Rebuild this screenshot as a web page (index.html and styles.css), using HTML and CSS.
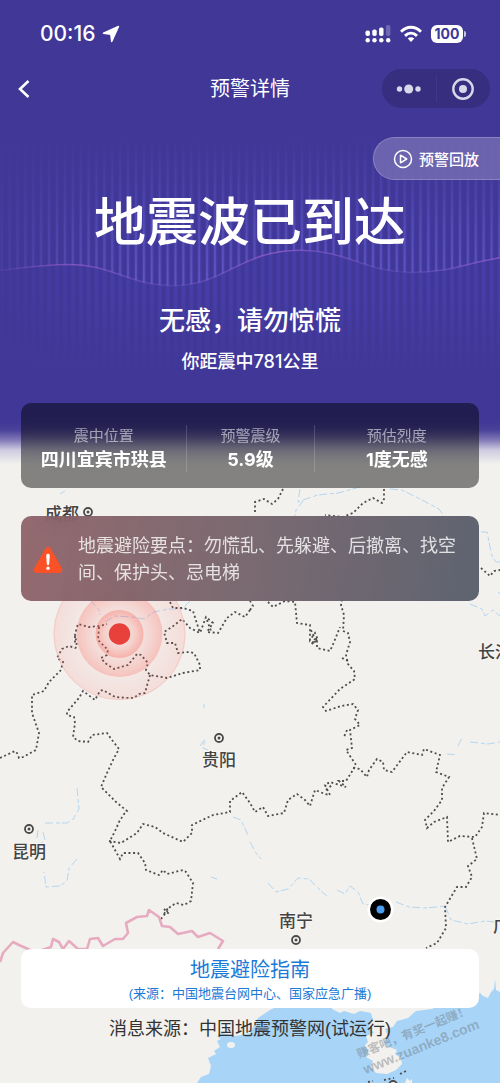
FILE: index.html
```html
<!DOCTYPE html>
<html lang="zh-CN">
<head>
<meta charset="utf-8">
<meta name="viewport" content="width=device-width, initial-scale=1">
<title>预警详情</title>
<link rel="stylesheet" href="styles.css">
</head>
<body>
<div class="screen">
  <svg class="map" viewBox="0 0 500 1083" preserveAspectRatio="xMidYMin slice" role="img" aria-label="震中地图">
    <defs>
      <radialGradient id="ring"><stop offset="0" stop-color="#ff5a50" stop-opacity=".04"/><stop offset=".6" stop-color="#ff5a50" stop-opacity=".12"/><stop offset="1" stop-color="#ff5a50" stop-opacity=".34"/></radialGradient>
      <g id="city"><circle r="4" fill="#f7f6f3" stroke="#4a4a4a" stroke-width="1.8"/><circle r="1.5" fill="#4a4a4a"/></g>
    </defs>
    <path class="sea" d="M197 1083L201 1077L209 1074L211 1066L208 1058L216 1054L214 1051L220 1047L217 1041L221 1039L217 1036L222 1033L236 1036L250 1033L258 1018L270 1010L290 1000L372 1000L370 1011L373 1019L369 1027L374 1033L366 1036L368 1042L364 1046L369 1050L366 1057L373 1061L371 1067L376 1073L387 1074L396 1070L402 1064L401 1058L395 1054L397 1050L387 1046L384 1042L388 1036L385 1029L393 1027L397 1021L408 1018L416 1011L432 1009L440 1005L463 1003L472 995L480 993L483 996L488 998L491 992L494 989L495 979L496 990L500 992V1083z"/>
    <g class="isle"><ellipse cx="231" cy="1045" rx="4" ry="3"/><path d="M332 1009l8 4 4-2 10 3 6-3 12 2v-7h-40zM405 1083l2-5 3 3 2-2v4z"/></g>
    <g class="river">
      <path d="M60 494l5-3M300 489l-2 13 5-1-7 9-1 6M303 500l15-5 20-2 22-6M390 489l12 1 18 9 19 10 5 7M481 532l6 0 2 10 3 14 4 6 4 0"/>
      <path d="M470 604l12 5 3 7 8-6 7 6M90 600l9 10 1 5M105 622l10-6 17 1 12 2 10-7 14-3 14 0 8-8M204 704l0 4M200 746l5-7-2 9 5 2"/>
      <path d="M447 754l10 1M458 746l4-8M470 742l18 2 12-2M77 788l2 21-5 8M38 830l-1 8M45 823l10 0 12 0 9-6M43 832l2 8-5 4M77 859l-8 9-2 13-7 5-14 1-2-15M233 817l8 3 7 15M250 842l6 11 5 6M268 883l8 9 12-3 10-11 11 1 12 12 6 5M337 890l8 4 5-8 8 6 5 12 8 1M396 902l13 5 17 1 19-2 6 14 17 4 17-3 10 1"/>
      <path d="M498 592l2 2M211 877l6 2"/>
    </g>
    <g class="border">
      <path d="M0 758l15-7 2 2 2 5 4-1 13-7 3-17-7-20 0-18 12-4 5-9 12-12 2-8-6-4 5-9 7-3 6 2 2-1-2-13 3-10 11 3 11-1 7-2"/>
      <path d="M99 627l-1 13 3 3 7 7-1 5-6 3 4 5 9 6 14-4 9-11 4 1 7 8-2 7 4 5 17 3 16-5 17-3 0-5-6-12-5-1-11 1-3-10-8 0-3-11 8-5 10-8 8 9 10 5 6-16 7 6-6 9 11 1 9-15 8-6 10 5 5-7"/>
      <path d="M170 602l3 6 10 0 10 3 7 22M250 610l3-4-3-5M150 675l-5 18-6 1-5 4-6 0-13-1-12-7-3 1-5 9-12-9-4 7-12 14 0 3 7 2 1 6-2 14 5 4 10 1 4-7 15-2 5 7 7 9-5 9-7 15-6 14 15 15 11 9-3 3-5 8-3 7-6 12 10 18 3-6 15 0 7 10 1 7 13 5 4-5 4 4 16-4 3 2 7 11-2 18-7 4-8-2-6 4-9 12M164 909l5 5M164 914l4-6"/>
      <path d="M109 841l12 2 16-10 6-9 12 3 8 6 20 9 9-9 0-8 21-10 17-3 0-11 12-9 8 11 5 9 8-5 5 9 16-3 4-13 9-6 8 6 5 6 5-16 10 4 5 1-5-10 5-3 16 5-7-6 7 0 10-16-10-15 6-2-2-18 10-5-5-6 3-9-5-6-12 2-15 5-3-4 17-18 15-10-1-8-6-7-2-9 4-13-2-9-5-2 1-16-3-10 3-15"/>
      <path d="M268 602l5 5 12-6 10 1 2 21 13 2 0 15 5-7 3 7-7 4 6-6 0 10 13 3 4-9 6-15M353 768l7 1 7 8 2-7 8-11 6 3 1 8 8 2 15-20 15 3 2-6 16 6-4 17 13 5-7 11 0 12-8 11-9 9 2 8 7-6 13-5 1 25 12-6 15 1 7-10 2-14 16 2"/>
      <path d="M472 838l5 21-9 7 4 11-6 10-9 0-12 20 1 21-9 15-11 5M283 489l-5 10-6 5-8-5-9 3 0 11M384 489l0 10-2 4-9-5-10 5-10 10-10 4-18-2M481 568l9 8 4-5 6-1"/>
      <path d="M368 1082l5-1M384 1080l10-2M400 1074l6-3M75 636l0 7M311 630l4 9-3 5 4-3M326 790l6-5M347 730l-3 7M342 658l6 3M207 620l4 11"/>
    </g>
    <path class="nation" d="M0 962l3-9 10-11 6 3 9 4 7 3 10-3 6-2 2-8 6 3 4 7 6-8 9 8 9 0 3-10 8-1 5 8 12-7 8 0 5-6-2-10 11-6 10-1 2-6 10 7 3 9 8 1 8 7 14-3 6 6 12-4 13 8-5 8"/>
    <g class="cities">
      <use href="#city" x="88" y="512"/><use href="#city" x="219" y="738"/><use href="#city" x="29" y="829"/><use href="#city" x="296" y="940"/><use href="#city" x="393" y="1085"/>
      <text x="45" y="520">成都</text><text x="202" y="766">贵阳</text><text x="12" y="858">昆明</text><text x="279" y="927">南宁</text><text x="478" y="658">长沙</text><text x="493" y="932">广州</text>
    </g>
    <g fill="url(#ring)"><circle cx="119.500" cy="634" r="66" opacity=".4"/><circle cx="119.500" cy="634" r="43" opacity=".8"/><circle cx="119.500" cy="634" r="24"/></g>
    <circle cx="119.500" cy="634" r="65.500" fill="none" stroke="#f8b5ae" stroke-opacity=".5"/>
    <circle cx="119.500" cy="634" r="10.700" fill="#e8413c"/>
    <circle cx="380.500" cy="909.500" r="13" fill="#fff"/><circle cx="380.500" cy="909.500" r="10.500"/><circle cx="380.500" cy="909.500" r="4" fill="#4a9df0"/>
  </svg>
  <svg class="wave" viewBox="0 0 500 460" preserveAspectRatio="xMidYMin slice" aria-hidden="true">
    <defs>
      <pattern id="bars" width="7.800" height="460" patternUnits="userSpaceOnUse"><rect x="4" width="1.600" height="460" fill="#928bec"/></pattern>
      <pattern id="bands" width="7.800" height="460" patternUnits="userSpaceOnUse"><rect x="3" width="4" height="460" fill="#5249c4"/></pattern>
      <linearGradient id="up" x1="0" y1="130" x2="0" y2="285" gradientUnits="userSpaceOnUse"><stop stop-color="#000"/><stop offset=".4" stop-color="#333"/><stop offset="1" stop-color="#aaa"/></linearGradient>
      <linearGradient id="down" x1="0" y1="130" x2="0" y2="375" gradientUnits="userSpaceOnUse"><stop stop-color="#000"/><stop offset=".4" stop-color="#999"/><stop offset=".65" stop-color="#999"/><stop offset="1" stop-color="#000"/></linearGradient>
      <linearGradient id="edge"><stop stop-color="#403797" stop-opacity=".75"/><stop offset=".18" stop-color="#403797" stop-opacity=".2"/><stop offset=".3" stop-color="#403797" stop-opacity="0"/></linearGradient>
      <linearGradient id="line"><stop stop-color="#a463d0" stop-opacity=".1"/><stop offset=".15" stop-color="#a463d0" stop-opacity=".6"/><stop offset=".35" stop-color="#8a66da" stop-opacity=".2"/><stop offset=".55" stop-color="#a463d0" stop-opacity=".7"/><stop offset=".8" stop-color="#7a62d8" stop-opacity=".25"/><stop offset="1" stop-color="#a463d0" stop-opacity=".7"/></linearGradient>
      <mask id="fadeUp" maskUnits="userSpaceOnUse" x="0" y="0" width="500" height="460"><rect width="500" height="460" fill="url(#up)"/></mask>
      <mask id="fadeDown" maskUnits="userSpaceOnUse" x="0" y="0" width="500" height="460"><rect width="500" height="460" fill="url(#down)"/></mask>
    </defs>
    <rect width="500" height="460" fill="url(#bands)" mask="url(#fadeDown)" opacity=".65"/>
    <path d="M0 100H500V254C465 259 448 269 410 269C365 269 345 247 300 247C240 247 225 282 175 282C130 282 115 261 70 261C40 261 20 266 0 267z" fill="url(#bars)" mask="url(#fadeUp)" opacity=".6"/>
    <rect y="120" width="500" height="260" fill="url(#edge)"/>
    <path d="M500 254C465 259 448 269 410 269C365 269 345 247 300 247C240 247 225 282 175 282C130 282 115 261 70 261C40 261 20 266 0 267" fill="none" stroke="url(#line)" stroke-width="1.500"/>
  </svg>

  <div class="status">
    <span class="clock">00:16</span>
    <svg width="18" height="18" viewBox="0 0 18 18" fill="#fff" stroke="#fff" stroke-width="1.500" stroke-linejoin="round" aria-hidden="true"><path d="M1.500 8.300 16.500 1.500 9.700 16.500 8.800 9.200z"/></svg>
    <svg class="signal" width="26" height="18" viewBox="0 0 26 18" fill="#fff" aria-hidden="true"><rect x=".5" y="5.500" width="4.400" height="5.500" rx="1.800"/><rect x="7.300" y="4.500" width="4.400" height="6.500" rx="1.800"/><rect x="14.100" y="2.500" width="4.400" height="8.500" rx="1.800"/><rect x="21" y="0" width="4.400" height="11" rx="1.800" opacity=".25"/><circle cx="2.700" cy="15.300" r="2.200"/><circle cx="9.500" cy="15.300" r="2.200"/><circle cx="16.300" cy="15.300" r="2.200"/><circle cx="23.200" cy="15.300" r="2.200"/></svg>
    <svg width="22" height="18" viewBox="0 0 22 18" fill="none" stroke="#fff" stroke-width="2.900" aria-hidden="true"><path d="M1 6.700C7 .7 15 .7 21 6.700M5 10.900c3.600-3.500 8.400-3.500 12 0"/><path d="M7.700 13.600C9.600 11.900 12.400 11.900 14.300 13.600L11 17z" fill="#fff" stroke="none"/></svg>
    <span class="battery">100</span>
  </div>

  <header class="nav">
    <button class="back" aria-label="返回"><svg width="12" height="18" viewBox="0 0 12 18" fill="none" stroke="#fff" stroke-width="2.600"><path d="M10.500 1 2 9l8.500 8"/></svg></button>
    <h2 class="nav-title">预警详情</h2>
    <div class="capsule">
      <button aria-label="更多"><svg width="26" height="24" viewBox="0 0 26 24" fill="#d9d7ea"><circle cx="3.500" cy="12" r="2.700"/><circle cx="12.700" cy="12" r="4.500"/><circle cx="22" cy="12" r="2.700"/></svg></button>
      <button aria-label="关闭"><svg width="24" height="24" viewBox="0 0 24 24"><circle cx="12" cy="12" r="9.700" fill="none" stroke="#d9d7ea" stroke-width="2.400"/><circle cx="12" cy="12" r="4" fill="#d9d7ea"/></svg></button>
    </div>
  </header>

  <button class="replay"><svg width="20" height="20" viewBox="0 0 20 20" fill="none" stroke="#fff" stroke-width="1.500" stroke-linejoin="round"><circle cx="10" cy="10" r="8.500"/><path d="M7.500 6.200v7.600L13.700 10z"/></svg>预警回放</button>

  <h1 class="headline">地震波已到达</h1>
  <p class="advice">无感，请勿惊慌</p>
  <p class="distance">你距震中781公里</p>

  <dl class="stats">
    <div><dt>震中位置</dt><dd>四川宜宾市珙县</dd></div>
    <div><dt>预警震级</dt><dd>5.9级</dd></div>
    <div><dt>预估烈度</dt><dd>1度无感</dd></div>
  </dl>

  <section class="tips">
    <svg width="30" height="28" viewBox="0 0 30 28" aria-hidden="true"><path d="M12.200 2.700C13.400.5 16.600.5 17.800 2.700L28.800 22.300C30 24.500 28.800 27 26.300 27H3.700C1.200 27 0 24.500 1.200 22.300z" fill="#fb5126"/><path d="M13.200 9.500c0-2.300 3.600-2.300 3.600 0l-.6 8.500c-.1 1.500-2.300 1.500-2.400 0z" fill="#fff"/><circle cx="15" cy="22.300" r="1.700" fill="#fff"/></svg>
    <p>地震避险要点：勿慌乱、先躲避、后撤离、找空间、保护头、忌电梯</p>
  </section>

  <footer class="foot">
    <a class="guide" href="#guide"><span class="guide-title">地震避险指南</span><span class="guide-note">(来源：中国地震台网中心、国家应急广播)</span></a>
    <p class="source">消息来源：中国地震预警网(试运行)</p>
  </footer>
  <div class="watermark" aria-hidden="true"><span>赚客吧，有奖一起赚！</span><span class="site">www.zuanke8.com</span></div>
</div>
</body>
</html>
```
FILE: styles.css
```css
* { box-sizing: border-box; }
body {
  margin: 0;
  background: #f2f1ee;
  font-family: "Liberation Sans", "Noto Sans CJK SC", sans-serif;
}
h1, h2, p, dl, dd { margin: 0; }
button { padding: 0; border: 0; background: none; color: inherit; font: inherit; cursor: pointer; }
svg { display: block; flex: none; }

.screen {
  position: relative;
  z-index: 0;
  display: flex;
  flex-direction: column;
  min-height: 100vh;
  overflow: hidden;
  color: #fff;
}
.map, .wave { position: absolute; top: 0; left: 0; width: 100%; }
.map { z-index: -2; height: 100%; }
.wave {
  z-index: -1;
  height: 466px;
  background: linear-gradient(#403797 0, #403797 420px, #4a4199 430px, rgba(100, 91, 170, .8) 440px, rgba(150, 145, 200, .4) 450px, rgba(242, 241, 238, 0) 464px);
}
.sea { fill: #a7d4f7; }
.isle { fill: #f2f1ee; }
.river { fill: none; stroke: #b4d6f0; stroke-width: 1; stroke-dasharray: 8 3 4 2; }
.border { fill: none; stroke: #4d4d4d; stroke-width: 1.8px; stroke-dasharray: 2 2.6; }
.nation { fill: none; stroke: #e6abc0; stroke-width: 2.6px; stroke-linejoin: round; }
.cities {
  fill: #444;
  font-size: 17px;
  font-weight: 500;
}
.cities text { stroke: #f7f6f3; stroke-width: 2px; paint-order: stroke; }

.status {
  display: flex;
  align-items: center;
  height: 67px;
  padding: 0 37px 0 40px;
}
.clock { margin-right: 7px; font: 500 21px/26px Inter, sans-serif; }
.signal { margin-left: auto; margin-right: 9px; }
.battery {
  position: relative;
  width: 32px;
  height: 18px;
  margin-left: 9px;
  border-radius: 6px;
  background: #fff;
  color: #403797;
  font: 700 14px/18px Inter, sans-serif;
  text-align: center;
}
.battery::after {
  content: "";
  position: absolute;
  top: 6px;
  right: -3px;
  width: 2px;
  height: 6px;
  border-radius: 0 2px 2px 0;
  background: #c9c6e4;
}

.nav {
  display: grid;
  grid-template-columns: 108px 1fr 108px;
  align-items: center;
  height: 43px;
  padding: 0 10px;
}
.back { justify-self: start; padding: 0 8px; }
.nav-title { padding-top: 1px; font-size: 20px; font-weight: 400; line-height: 28px; text-align: center; }
.capsule {
  display: grid;
  grid-template-columns: 1fr 1fr;
  height: 39px;
  border-radius: 20px;
  background: #382e80;
}
.capsule button { display: flex; align-items: center; justify-content: center; }
.capsule button + button { position: relative; }
.capsule button + button::before {
  content: "";
  position: absolute;
  left: 0;
  width: 1px;
  height: 26px;
  background: #41388c;
}

.replay {
  display: flex;
  align-items: center;
  align-self: flex-end;
  gap: 6px;
  height: 43px;
  margin-top: 27px;
  padding: 0 21px 0 19px;
  border: 1px solid #8983bf;
  border-right: 0;
  border-radius: 22px 0 0 22px;
  background: rgba(116, 107, 178, .85);
  font-size: 15px;
  font-weight: 500;
}
.headline { margin-top: 13px; font-size: 52px; font-weight: 500; line-height: 60px; text-align: center; }
.advice { margin-top: 50px; font-size: 26px; font-weight: 500; line-height: 36px; text-align: center; }
.distance {
  margin-top: 10px;
  font-family: Inter, "Noto Sans CJK SC", sans-serif;
  font-size: 18px;
  font-weight: 500;
  line-height: 26px;
  text-align: center;
}

.stats {
  display: grid;
  grid-template-columns: 13fr 10fr 13fr;
  margin: 28px 21px 0;
  padding: 22px 0 16px;
  border-radius: 10px;
  background: rgba(0, 0, 0, .46);
  backdrop-filter: blur(4px);
  font-family: Inter, "Noto Sans CJK SC", sans-serif;
  text-align: center;
}
.stats div + div { border-left: 1px solid rgba(255, 255, 255, .16); }
.stats dt { color: rgba(255, 255, 255, .55); font-size: 15px; line-height: 22px; }
.stats dd { margin-top: 1px; font-size: 18px; font-weight: 700; line-height: 24px; }

.tips {
  display: flex;
  align-items: center;
  gap: 15px;
  margin: 28px 21px 0;
  padding: 17px 16px 14px 12px;
  border-radius: 10px;
  background: linear-gradient(100deg, rgba(134, 86, 94, .88), rgba(112, 94, 102, .92) 50%, rgba(83, 89, 103, .93));
  backdrop-filter: blur(8px);
  color: rgba(255, 255, 255, .8);
  font-size: 18px;
  line-height: 27px;
}

.foot { margin-top: auto; padding: 20px 21px 41px; text-align: center; }
.guide {
  display: flex;
  flex-direction: column;
  padding: 7px 0 4px;
  border-radius: 10px;
  background: #fff;
  color: #1b7ad6;
  text-decoration: none;
}
.guide-title { font-size: 20px; line-height: 28px; }
.guide-note { font-size: 13px; line-height: 20px; }
.source { margin-top: 8px; color: #333; font-size: 18px; line-height: 26px; }

.watermark {
  position: absolute;
  right: 20px;
  bottom: 28px;
  display: flex;
  flex-direction: column;
  color: rgba(110, 115, 120, .42);
  font-size: 12px;
  font-weight: 700;
  line-height: 16px;
  transform: rotate(-22deg);
}
.site { font-size: 14px; }
```
